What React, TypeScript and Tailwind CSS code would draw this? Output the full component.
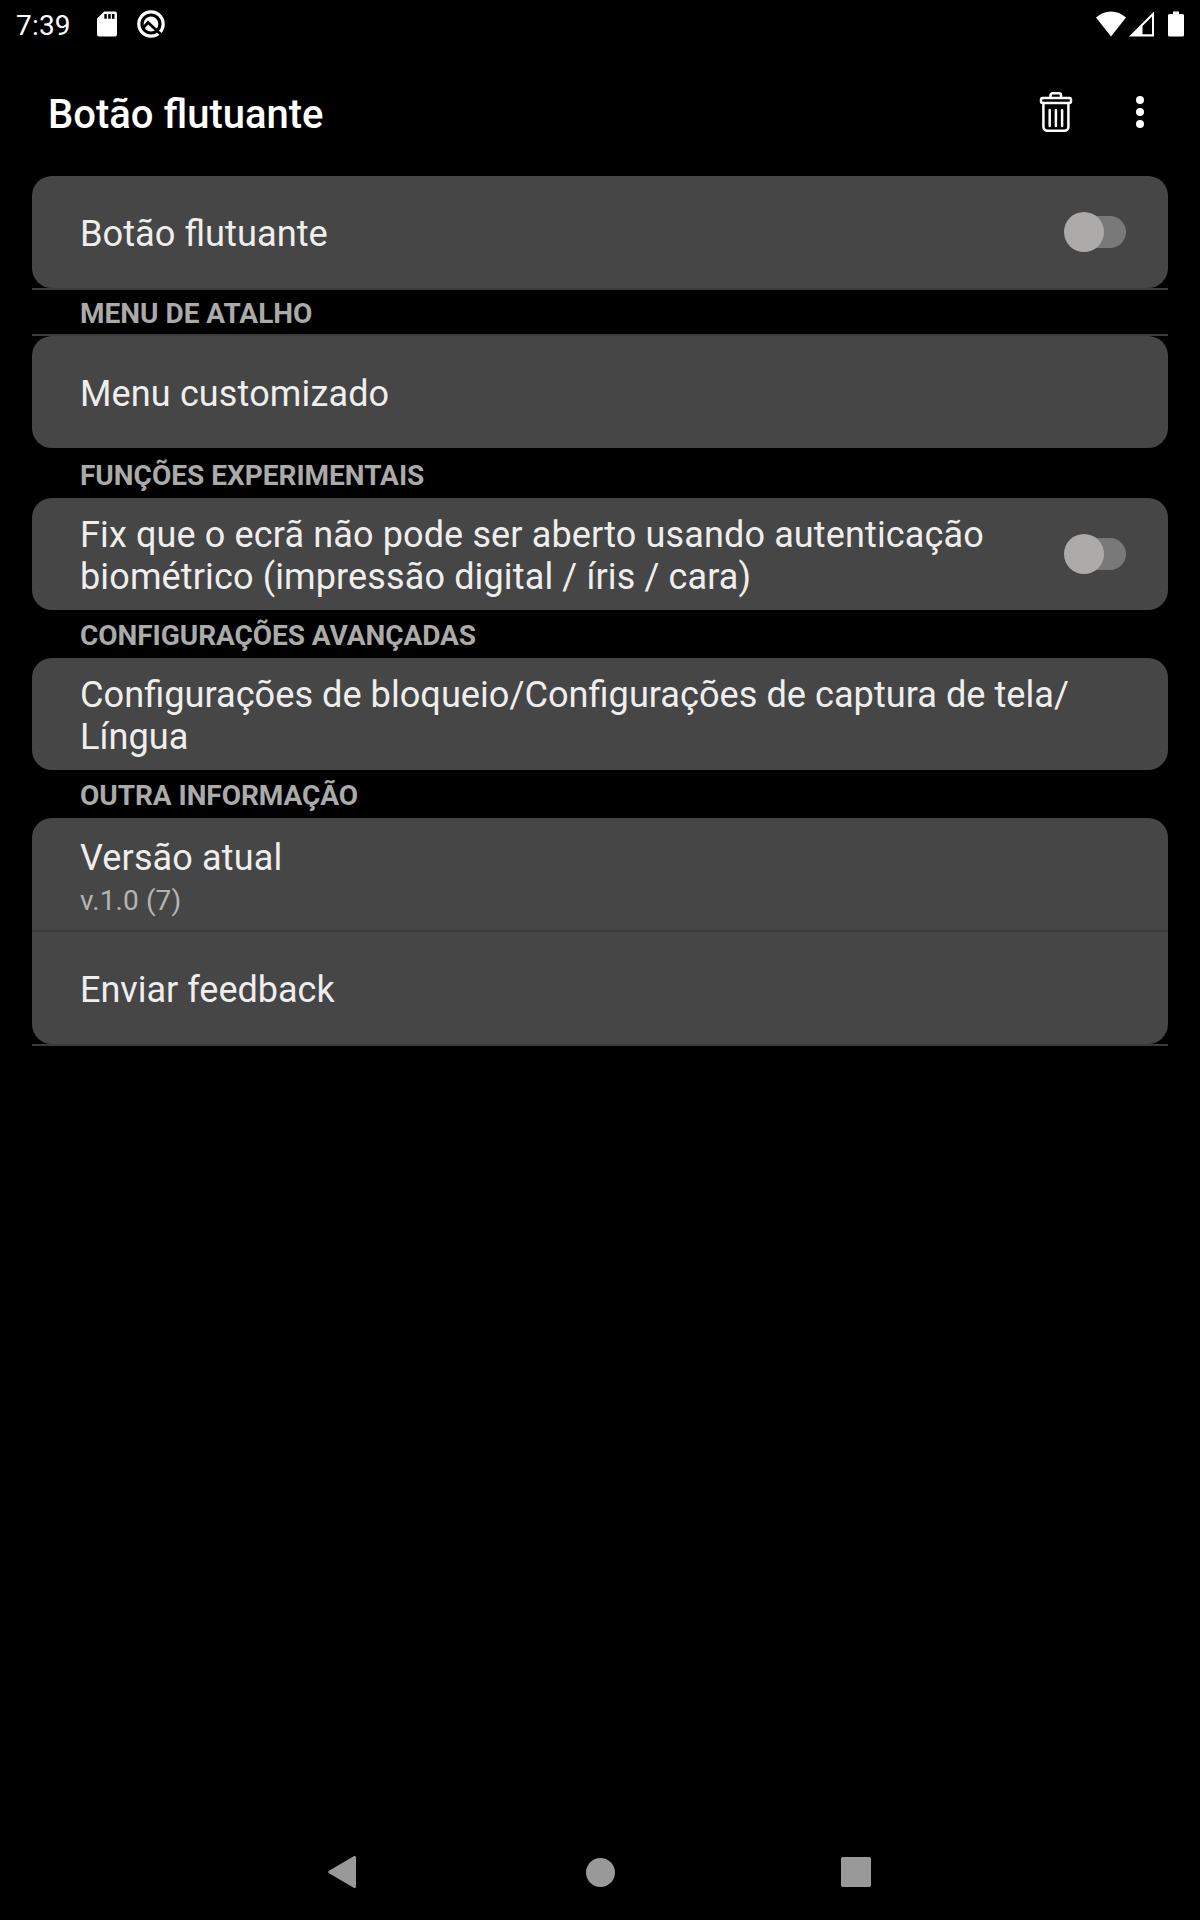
import type { ReactNode } from 'react';

function StatusBar() {
  return (
    <div className="flex h-12 items-center justify-between">
      <div className="flex items-center">
        <span className="w-[96px] pl-4 text-[28px] leading-[33px] tracking-[0.2px] pt-[2px]">7:39</span>
        <svg width="22" height="26" viewBox="0 0 22 26" fill="white">
          <path
            fillRule="evenodd"
            d="M8.2 0.5H19a2 2 0 0 1 2 2V23.5a2 2 0 0 1-2 2H3a2 2 0 0 1-2-2V7.5zM8.3 3v4.8h2.5V3zM12.2 3v4.8h2.5V3zM16 3v4.8h2.5V3z"
          />
        </svg>
        <svg className="ml-[18px]" width="30" height="30" viewBox="0 0 30 30" fill="none">
          <circle cx="15" cy="15" r="12.2" stroke="white" strokeWidth="3.2" />
          <circle cx="15" cy="15" r="7.4" fill="white" />
          <path d="M7.5 18.5L12 13.5L24.8 25.3" stroke="black" strokeWidth="2.8" />
        </svg>
      </div>
      <div className="flex items-center pr-4">
        <svg width="30" height="26" viewBox="0 0 30 26" fill="white">
          <path d="M0 6.500C8.5 -1.5 21.5 -1.5 30 6.5L15 25.5z" />
        </svg>
        <svg className="ml-[3px]" width="25" height="26" viewBox="0 0 25 26" fill="white">
          <path fillRule="evenodd" d="M25 0.5V25.5H0zM23 5.5L13.5 15V23.3H23z" />
        </svg>
        <svg className="ml-[14px]" width="16" height="26" viewBox="0 0 16 26" fill="white">
          <path d="M5 0.5h6V3h3.5A1.5 1.5 0 0 1 16 4.5v19.5a1.5 1.5 0 0 1-1.5 1.5h-13A1.5 1.5 0 0 1 0 24V4.5A1.5 1.5 0 0 1 1.5 3H5z" />
        </svg>
      </div>
    </div>
  );
}

function Toolbar() {
  return (
    <header className="flex h-32 items-start pl-12 pr-14">
      <h1 className="flex-1 pt-[43px] text-[40px] font-medium leading-[47px]">Botão flutuante</h1>
      <svg className="mt-[43px]" width="34" height="42" viewBox="0 0 34 42" fill="none" stroke="white" strokeWidth="2.5" strokeLinecap="round">
        <path d="M11.5 6.5V4.2a2 2 0 0 1 2-2h6.5a2 2 0 0 1 2 2v2.3" />
        <rect x="2" y="7" width="30" height="5" rx="1.8" />
        <path d="M4.4 12V35.800a4 4 0 0 0 4 4H25.400a4 4 0 0 0 4-4V12" />
        <path d="M10.7 19v16M16.9 19v16M23.1 19v16" />
      </svg>
      <svg className="ml-[63px] mt-[47px]" width="8" height="34" viewBox="0 0 8 34" fill="white">
        <circle cx="4" cy="5" r="4" />
        <circle cx="4" cy="17" r="4" />
        <circle cx="4" cy="29" r="4" />
      </svg>
    </header>
  );
}

function Switch() {
  return (
    <div className="relative mr-[42px] h-10 w-[62px] shrink-0">
      <div className="mt-1 ml-2 h-8 w-[54px] rounded-full bg-[#797979]" />
      <div className="absolute left-0 top-0 size-10 rounded-full bg-[#adabaa]" />
    </div>
  );
}

function Card({ children }: { children: ReactNode }) {
  return <div className="rounded-[20px] bg-[#464646]">{children}</div>;
}

type RowProps = {
  title: ReactNode;
  titleClass?: string;
  summary?: string;
  toggle?: boolean;
};

function Row({ title, titleClass = 'text-[36px]', summary, toggle }: RowProps) {
  return (
    <div className="flex h-28 items-center pl-12">
      <div className={`flex-1 leading-[42px] text-[#eeeeee] ${summary ? 'pt-[5px]' : 'pt-1'}`}>
        <div className={titleClass}>{title}</div>
        {summary && (
          <div className="mt-[5px] text-[28px] leading-[33px] tracking-[0.1px] text-[#b4b4b4]">{summary}</div>
        )}
      </div>
      {toggle && <Switch />}
    </div>
  );
}

const Divider = () => <div className="h-[2px] bg-[#3c3c3c]" />;

function Heading({ className, children }: { className: string; children: string }) {
  return (
    <h2 className={`pl-12 text-[28px] font-bold uppercase leading-[33px] text-[#aaaaaa] ${className}`}>{children}</h2>
  );
}

function NavBar() {
  return (
    <nav className="flex h-24 items-center justify-center gap-[224px]">
      <svg width="32" height="32" viewBox="0 0 32 32" fill="#999999" stroke="#999999" strokeWidth="3" strokeLinejoin="round">
        <path d="M1.8 16L26.5 1.5V30.5z" />
      </svg>
      <div className="flex size-8 items-center justify-center">
        <div className="size-[29px] rounded-full bg-[#999999]" />
      </div>
      <div className="flex size-8 items-center justify-center">
        <div className="size-[30px] rounded-[2px] bg-[#999999]" />
      </div>
    </nav>
  );
}

export default function App() {
  return (
    <div className="flex h-[1920px] w-[1200px] flex-col bg-black font-['Roboto',sans-serif] text-white">
      <StatusBar />
      <Toolbar />
      <main className="flex-1 px-8">
        <Card>
          <Row title="Botão flutuante" titleClass="text-[36.25px]" toggle />
        </Card>
        <Divider />
        <Heading className="h-11 pt-[7px]">Menu de atalho</Heading>
        <Divider />
        <Card>
          <Row title="Menu customizado" titleClass="text-[36px] tracking-[0.14px]" />
        </Card>
        <Heading className="h-[50px] pt-[11px]">Funções experimentais</Heading>
        <Card>
          <Row
            title={
              <>
                Fix que o ecrã não pode ser aberto usando autenticação
                <br />
                biométrico (impressão digital / íris / cara)
              </>
            }
            titleClass="text-[36px] tracking-[0.135px]"
            toggle
          />
        </Card>
        <Heading className="h-12 pt-[9px] tracking-[-0.05px]">Configurações avançadas</Heading>
        <Card>
          <Row
            title={
              <>
                Configurações de bloqueio/Configurações de captura de tela/
                <br />
                Língua
              </>
            }
            titleClass="text-[36.18px]"
          />
        </Card>
        <Heading className="h-12 pt-[9px] tracking-[-0.05px]">Outra informação</Heading>
        <Card>
          <Row title="Versão atual" titleClass="text-[36px] tracking-[0.15px]" summary="v.1.0 (7)" />
          <Divider />
          <Row title="Enviar feedback" />
        </Card>
        <Divider />
      </main>
      <NavBar />
    </div>
  );
}
